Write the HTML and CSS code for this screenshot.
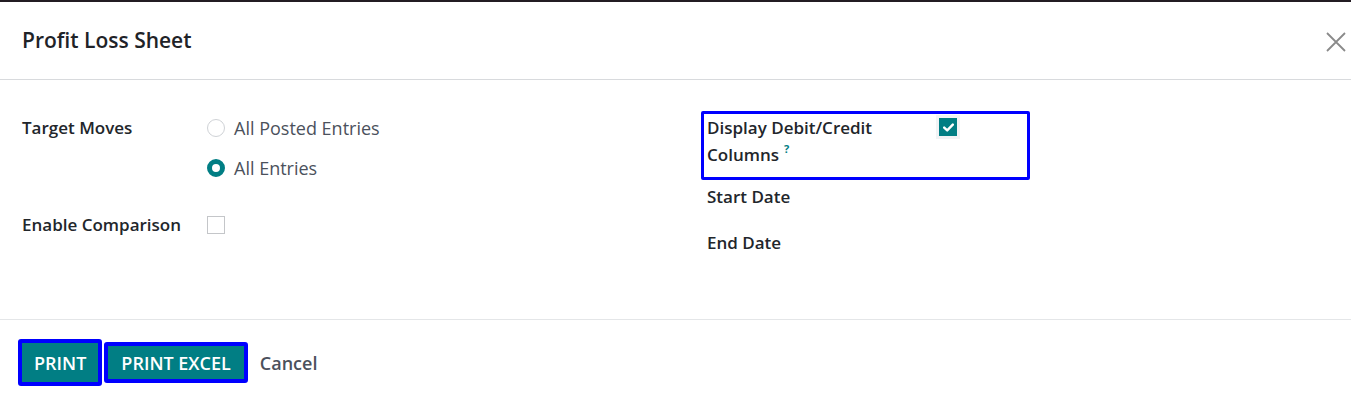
FILE: index.html
```html
<!DOCTYPE html>
<html>
<head>
<meta charset="utf-8">
<link rel="stylesheet" href="styles.css">
</head>
<body>
<div class="topline"></div>
<div class="dialog">
  <header class="dlg-header">
    <h4 class="dlg-title">Profit Loss Sheet</h4>
    <button class="close" aria-label="Close">
      <svg width="20" height="20" viewBox="0 0 20 20"><path d="M1 1 L19 19 M19 1 L1 19" stroke="#8a8a8a" stroke-width="1.8" fill="none"/></svg>
    </button>
  </header>
  <main class="dlg-body">
    <div class="group left">
      <div class="row">
        <div class="label">Target Moves</div>
        <div class="radios">
          <label class="opt"><span class="radio"></span>All Posted Entries</label>
          <label class="opt"><span class="radio checked"></span>All Entries</label>
        </div>
      </div>
      <div class="row">
        <div class="label">Enable Comparison</div>
        <div class="value"><span class="cbox"></span></div>
      </div>
    </div>
    <div class="group right">
      <div class="highlight">
        <div class="label wrap">Display Debit/Credit<br>Columns<sup class="help">?</sup></div>
        <div class="value"><span class="cbox checked"><svg width="11" height="9" viewBox="0 0 11 9"><path d="M1.2 4.6 L4.2 7.4 L9.8 1.6" stroke="#fff" stroke-width="2.4" fill="none" stroke-linecap="round" stroke-linejoin="round"/></svg></span></div>
      </div>
      <div class="row single"><div class="label">Start Date</div></div>
      <div class="row single"><div class="label">End Date</div></div>
    </div>
  </main>
  <footer class="dlg-footer">
    <button class="btn primary big">PRINT</button>
    <button class="btn primary">PRINT EXCEL</button>
    <button class="btn link">Cancel</button>
  </footer>
</div>
</body>
</html>
```
FILE: styles.css
```css
* { box-sizing: border-box; }
html, body { margin: 0; padding: 0; background: #fff; }
body {
  font-family: "Open Sans", "Noto Sans", sans-serif;
  color: #212529;
  width: 1351px;
  height: 404px;
  overflow: hidden;
}
.topline { height: 2px; background: #231c23; }
.dialog { display: flex; flex-direction: column; }
.dlg-header {
  height: 78px;
  border-bottom: 1px solid #d8dadd;
  display: flex;
  align-items: center;
  justify-content: space-between;
  padding: 0 5px 0 22px;
}
.dlg-title {
  margin: 0;
  font-size: 21px;
  font-weight: 600;
  color: #1f2328;
  padding-bottom: 1px;
}
.close {
  border: 0; background: none; padding: 0; width: 20px; height: 20px;
  margin-right: 0; display: flex; margin-top: 3px;
}
.dlg-body {
  height: 239px;
  display: flex;
  padding: 31px 0 0 22px;
  font-size: 17px;
}
.group { display: flex; flex-direction: column; }
.left { width: 679px; gap: 23px; }
.right { gap: 0; }
.row { display: flex; align-items: flex-start; }
.label { font-weight: 600; line-height: 34px; color: #22262b; }
.left .label { width: 185px; }
.radios { display: flex; flex-direction: column; gap: 6px; }
.opt { display: flex; align-items: center; height: 34px; color: #4b515c; font-size: 18px; }
.radio {
  width: 18px; height: 18px; border-radius: 50%;
  border: 1px solid #cfd2d6; margin-right: 9px; background: #fff;
}
.radio.checked { border: 5px solid #017e84; }
.value { display: flex; align-items: center; height: 34px; }
.cbox {
  width: 18px; height: 18px; border: 1px solid #c4c6c9; background: #fff;
  display: flex; align-items: center; justify-content: center;
}
.cbox.checked { background: #017e84; border-color: #017e84; box-shadow: 0 0 0 3px #f1f3f5; }
.highlight {
  width: 329px; height: 69px;
  border: 3px solid #0000ff;
  border-radius: 2px;
  padding: 0 0 0 3px;
  display: flex;
  align-items: flex-start;
}
.highlight .label { line-height: 27px; width: 232px; }
.highlight .value { height: 27px; padding-top: 4px; align-items: flex-start; }
.help {
  color: #017e84; font-size: 11px; font-weight: 700;
  vertical-align: 8px; line-height: 0; margin-left: 5px;
}
.row.single { height: 34px; padding-left: 6px; }
.row.single + .row.single { margin-top: 12px; }
.dlg-footer {
  border-top: 1px solid #e4e6e8;
  height: 86px;
  display: flex;
  align-items: center;
  padding: 0 0 0 18px;
  gap: 2px;
}
.btn {
  font-family: inherit;
  font-size: 18px;
  font-weight: 600;
  cursor: pointer;
}
.primary {
  background: #017e84;
  color: #fff;
  border: 4px solid #0000ff;
  border-radius: 3px;
  height: 41px;
  padding: 0 13px;
}
.primary.big { height: 47px; padding: 0 12px; }
.link {
  background: none; border: 0; color: #4b515c; margin-left: 10px; padding: 0;
}
```
